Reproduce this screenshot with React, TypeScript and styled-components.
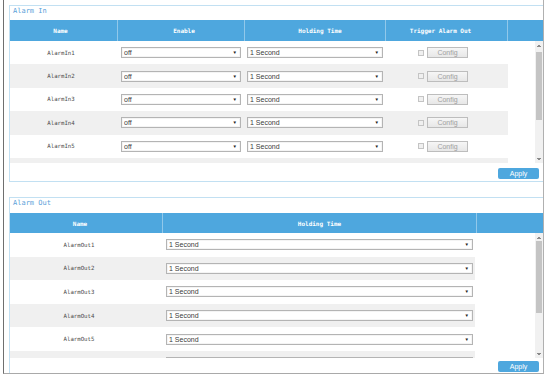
import React from "react";
import styled, { createGlobalStyle } from "styled-components";

const GlobalStyle = createGlobalStyle`
  html, body {
    margin: 0;
    padding: 0;
    background: #ffffff;
  }
  body {
    font-family: "Liberation Sans", Arial, sans-serif;
  }
  * {
    box-sizing: border-box;
  }
`;

const Frame = styled.div`
  border-bottom: 1px solid #a9a9a9;
  border-left: 1px solid #6f6f6f;
  border-right: 1px solid #b0b0b0;
  margin-left: 3px;
  padding: 5px 0 0 5px;
  width: 541px;
`;

const Panel = styled.section<{ $last?: boolean }>`
  border: 1px solid #c2e0f2;
  border-bottom: ${(p) => (p.$last ? "none" : "1px solid #c2e0f2")};
  border-right: none;
  display: flex;
  flex-direction: column;
  margin-top: ${(p) => (p.$last ? "15px" : "0")};
`;

const PanelTitle = styled.div<{ $h: number }>`
  color: #5a9fd9;
  font-family: "DejaVu Sans Mono", monospace;
  font-size: 7px;
  height: ${(p) => p.$h}px;
  line-height: 11px;
  padding-left: 3px;
`;

const HeaderRow = styled.div<{ $cols: string; $h: number }>`
  background: #4ea7de;
  display: grid;
  grid-template-columns: ${(p) => p.$cols};
  height: ${(p) => p.$h}px;
`;

const HeaderCell = styled.div<{ $nudge?: number }>`
  align-items: center;
  border-right: 1px solid rgba(255, 255, 255, 0.38);
  color: #ffffff;
  display: flex;
  font-family: "DejaVu Sans Mono", monospace;
  font-size: 6px;
  font-weight: bold;
  justify-content: center;

  span {
    transform: translateX(${(p) => p.$nudge ?? 0}px);
  }

  &:last-child {
    border-right: none;
  }
`;

const ScrollArea = styled.div<{ $h: number }>`
  display: flex;
  height: ${(p) => p.$h}px;
  overflow: hidden;
`;

const Rows = styled.div`
  flex: 1;
  overflow: hidden;
`;

const ScrollBar = styled.div`
  background: #f1f1f1;
  display: flex;
  flex-direction: column;
  width: 8px;
`;

const ScrollArrow = styled.div<{ $down?: boolean }>`
  background-image: ${(p) =>
    p.$down
      ? "conic-gradient(from -34deg at 50% 100%, #8a8a8a 0deg 68deg, transparent 68deg)"
      : "conic-gradient(from 146deg at 50% 0, #8a8a8a 0deg 68deg, transparent 68deg)"};
  background-position: center;
  background-repeat: no-repeat;
  background-size: 4px 3px;
  height: 8px;
`;

const ScrollTrack = styled.div`
  flex: 1;
  padding: 0 1px;
`;

const ScrollThumb = styled.div<{ $top: number; $h: number }>`
  background: #c4c4c4;
  height: ${(p) => p.$h}px;
  margin-top: ${(p) => p.$top}px;
`;

const BodyRow = styled.div<{ $cols: string; $h: number }>`
  align-items: center;
  display: grid;
  grid-template-columns: ${(p) => p.$cols};
  height: ${(p) => p.$h}px;
  width: max-content;

  &:nth-child(even) {
    background: #f0f0f0;
  }
`;

const NameCell = styled.div<{ $nudge?: number }>`
  color: #4a4a4a;
  font-family: "DejaVu Sans Mono", monospace;
  font-size: 5.7px;
  text-align: center;
  transform: translateX(${(p) => p.$nudge ?? 0}px);
`;

const Cell = styled.div<{ $pad: number }>`
  align-items: center;
  display: flex;
  padding-left: ${(p) => p.$pad}px;
`;

const SelectBox = styled.div<{ $w: number }>`
  align-items: center;
  background: #ffffff;
  border: 1px solid #b4b4b4;
  box-shadow: inset 0 0 0 1px #f4f4f4;
  color: #3a3a3a;
  display: flex;
  font-size: 7px;
  height: 11px;
  justify-content: space-between;
  padding: 0 3px 0 2px;
  width: ${(p) => p.$w}px;
`;

const Caret = styled.span`
  color: #222222;
  font-size: 4.5px;
`;

const Checkbox = styled.span`
  background: #f0f0f0;
  border: 1px solid #c4c4c4;
  height: 6px;
  margin-right: 3px;
  width: 6px;
`;

const ConfigButton = styled.button`
  background: linear-gradient(#f6f6f6, #e7e7e7);
  border: 1px solid #bdbdbd;
  color: #a0a0a0;
  font-family: "Liberation Sans", Arial, sans-serif;
  font-size: 7px;
  height: 11px;
  line-height: 9px;
  padding: 0;
  width: 41px;
`;

const Footer = styled.div<{ $h: number; $top: number }>`
  display: flex;
  height: ${(p) => p.$h}px;
  justify-content: flex-end;
  padding: ${(p) => p.$top}px 4px 0 0;
`;

const ApplyButton = styled.button`
  background: #4ea7de;
  border: none;
  border-radius: 2px;
  color: #ffffff;
  font-family: "Liberation Sans", Arial, sans-serif;
  font-size: 7px;
  height: 11px;
  padding: 0;
  width: 41px;
`;

const inCols = "108px 127px 141px 122px";
const outCols = "138px 327px";

// rows that fit in the scroll window; one more row peeks in under them
const alarmIns = Array.from({ length: 5 }, (_, i) => `AlarmIn${i + 1}`);
const alarmOuts = Array.from({ length: 5 }, (_, i) => `AlarmOut${i + 1}`);

function Select({ value, width }: { value: string; width: number }) {
  return (
    <SelectBox $w={width}>
      <span>{value}</span>
      <Caret>{value ? "▼" : ""}</Caret>
    </SelectBox>
  );
}

function Scroller({ top, size }: { top: number; size: number }) {
  return (
    <ScrollBar>
      <ScrollArrow />
      <ScrollTrack>
        <ScrollThumb $top={top} $h={size} />
      </ScrollTrack>
      <ScrollArrow $down />
    </ScrollBar>
  );
}

function AlarmInRow({ name }: { name: string }) {
  return (
    <BodyRow $cols={inCols} $h={23.4}>
      <NameCell $nudge={-3}>{name}</NameCell>
      <Cell $pad={3}>
        <Select value={name ? "off" : ""} width={120} />
      </Cell>
      <Cell $pad={2}>
        <Select value={name ? "1 Second" : ""} width={136} />
      </Cell>
      <Cell $pad={32}>
        <Checkbox />
        <ConfigButton>{name ? "Config" : ""}</ConfigButton>
      </Cell>
    </BodyRow>
  );
}

function AlarmOutRow({ name }: { name: string }) {
  return (
    <BodyRow $cols={outCols} $h={23.6}>
      <NameCell>{name}</NameCell>
      <Cell $pad={18}>
        <Select value={name ? "1 Second" : ""} width={307} />
      </Cell>
    </BodyRow>
  );
}

function AlarmInPanel() {
  return (
    <Panel>
      <PanelTitle $h={14}>Alarm In</PanelTitle>
      <HeaderRow $cols={`${inCols} 1fr`} $h={21}>
        <HeaderCell $nudge={-3}><span>Name</span></HeaderCell>
        <HeaderCell $nudge={3}><span>Enable</span></HeaderCell>
        <HeaderCell $nudge={5}><span>Holding Time</span></HeaderCell>
        <HeaderCell $nudge={-6}><span>Trigger Alarm Out</span></HeaderCell>
        <HeaderCell />
      </HeaderRow>
      <ScrollArea $h={122}>
        <Rows>
          {alarmIns.map((name) => (
            <AlarmInRow key={name} name={name} />
          ))}
          <AlarmInRow name="" />
        </Rows>
        <Scroller top={3} size={68} />
      </ScrollArea>
      <Footer $h={18} $top={5}>
        <ApplyButton>Apply</ApplyButton>
      </Footer>
    </Panel>
  );
}

function AlarmOutPanel() {
  return (
    <Panel $last>
      <PanelTitle $h={15}>Alarm Out</PanelTitle>
      <HeaderRow $cols="153px 314px 1fr" $h={20}>
        <HeaderCell $nudge={-6}><span>Name</span></HeaderCell>
        <HeaderCell><span>Holding Time</span></HeaderCell>
        <HeaderCell />
      </HeaderRow>
      <ScrollArea $h={125}>
        <Rows>
          {alarmOuts.map((name) => (
            <AlarmOutRow key={name} name={name} />
          ))}
          <AlarmOutRow name="" />
        </Rows>
        <Scroller top={0} size={72} />
      </ScrollArea>
      <Footer $h={15} $top={3}>
        <ApplyButton>Apply</ApplyButton>
      </Footer>
    </Panel>
  );
}

export default function App() {
  return (
    <>
      <GlobalStyle />
      <Frame>
        <AlarmInPanel />
        <AlarmOutPanel />
      </Frame>
    </>
  );
}
